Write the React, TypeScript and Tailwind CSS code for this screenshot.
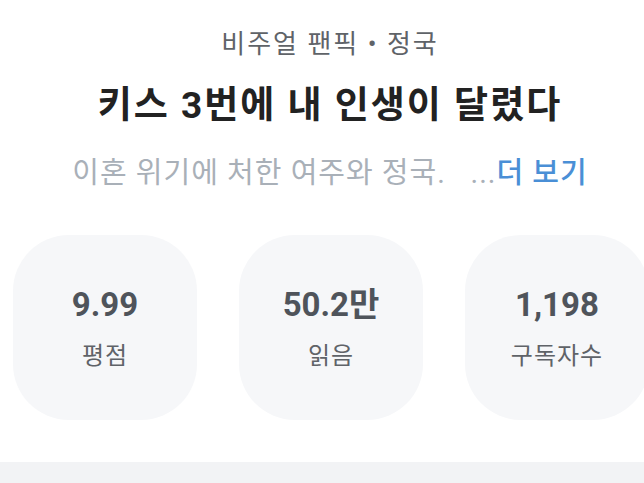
import React from "react";

const stats = [
  { value: "9.99", label: "평점" },
  { value: "50.2만", label: "읽음" },
  { value: "1,198", label: "구독자수" },
];

const App = () => {
  return (
    <div
      className="w-[644px] h-[483px] overflow-hidden bg-white flex flex-col"
      style={{ fontFamily: 'Roboto, "Noto Sans CJK KR", sans-serif' }}
    >
      <div className="flex flex-col items-center pt-[26px] pl-[16px]">
        <div className="text-[26px] leading-[36px] text-[#5f6368] tracking-[2px]">비주얼 팬픽 • 정국</div>
        <h1 className="mt-[21px] text-[37px] leading-[46px] font-bold text-[#222222] tracking-[2px]">
          키스 3번에 내 인생이 달렸다
        </h1>
        <p className="mt-[24px] text-[29px] leading-[40px] text-[#a9b0b8] whitespace-pre tracking-[1px]">
          이혼 위기에 처한 여주와 정국.{"   "}...
          <span className="text-[#4a8fd6] font-medium">더 보기</span>
        </p>
      </div>

      <div className="flex gap-[42px] pl-[13px] mt-[42px] overflow-hidden">
        {stats.map((s) => (
          <div
            key={s.label}
            className="shrink-0 w-[184px] h-[185px] rounded-[56px] bg-[#f6f7f9] flex flex-col items-center justify-center"
          >
            <div className="text-[33px] leading-[40px] font-bold text-[#4f545b]">{s.value}</div>
            <div className="mt-[16px] text-[24px] leading-[30px] text-[#5f6368] tracking-[1px]">{s.label}</div>
          </div>
        ))}
      </div>

      <div className="mt-[42px] flex-1 bg-[#f2f3f5]" />
    </div>
  );
};

export default App;
